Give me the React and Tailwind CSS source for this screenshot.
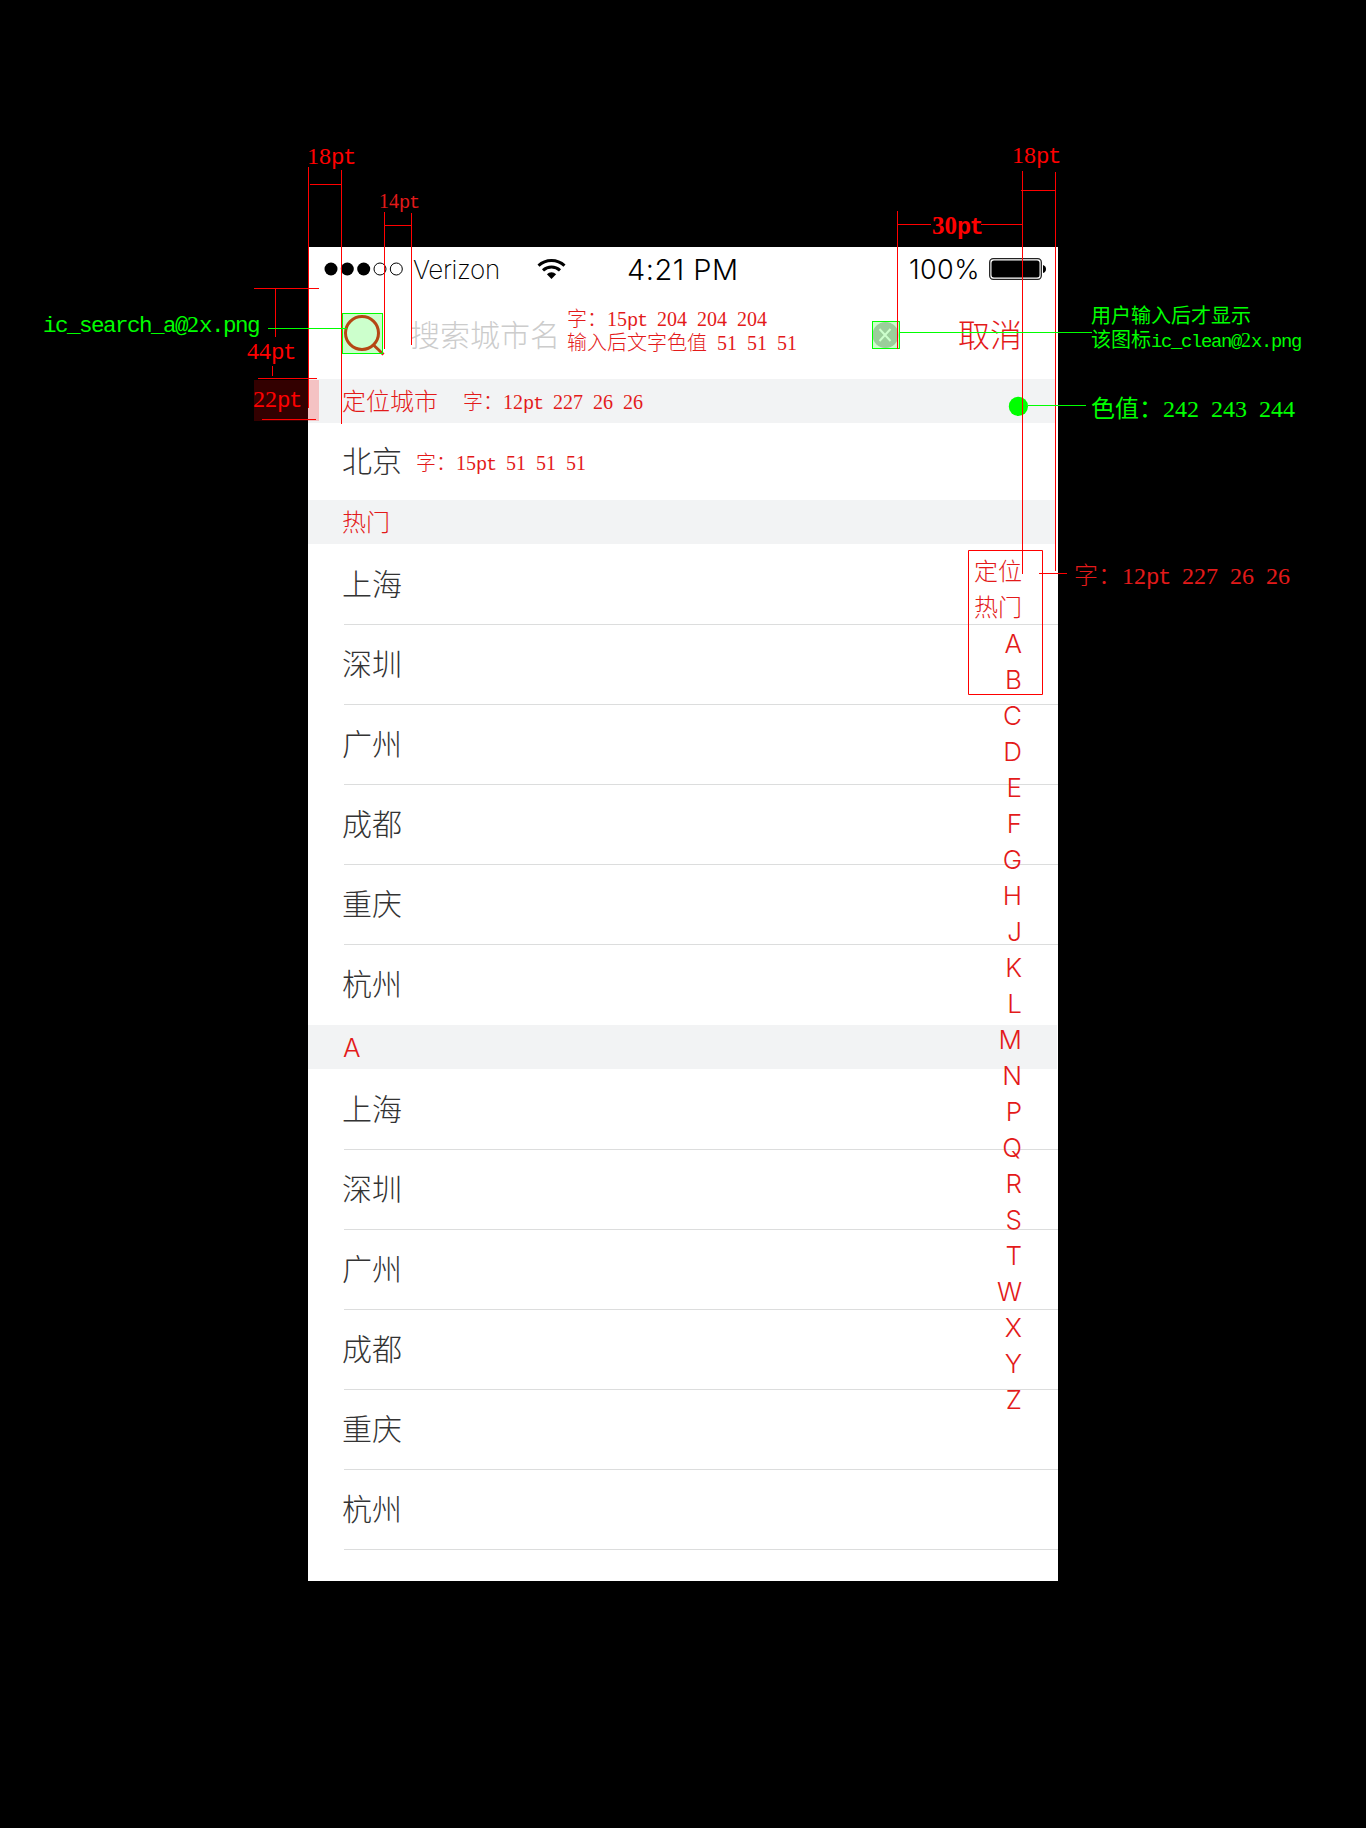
import React from "react";

const cities = ["上海", "深圳", "广州", "成都", "重庆", "杭州"];
const indexItems = ["定位", "热门", ..."ABCDEFGHJKLMNPQRSTWXYZ"];

const sans = "font-[Inter,'Noto_Sans_CJK_SC',sans-serif]";
const hei = "font-['Noto_Sans_CJK_SC',sans-serif]";

/* Annotation text: digits are half an em wide, Latin runs use a monospace that fills half-em cells. */
function Note({ className, lines }) {
  return (
    <div
      lang="zh-CN"
      className={
        "absolute flex flex-col gap-[4px] whitespace-pre leading-none [word-spacing:0.25em] font-['Liberation_Serif','Noto_Sans_CJK_SC',serif] " +
        className
      }
    >
      {lines.map((line) => (
        <p key={line} className="h-[1em]">
          {line.split(/([a-z_.@]+)/).map((run, i) =>
            i % 2 ? (
              <span key={i} className="text-[0.94em] tracking-[-0.068em] font-['Liberation_Mono',monospace]">
                {run}
              </span>
            ) : (
              run
            )
          )}
        </p>
      ))}
    </div>
  );
}

function StatusBar() {
  return (
    <div className={"flex h-[41px] items-center text-black pt-[4px] " + sans}>
      <svg className="mb-[2px] ml-[16px] shrink-0" width="80" height="14" viewBox="0 0 80 14">
        <circle cx="7" cy="7" r="6.5" />
        <circle cx="23.3" cy="7" r="6.5" />
        <circle cx="39.7" cy="7" r="6.5" />
        <circle cx="56" cy="7" r="6" fill="none" stroke="#000" />
        <circle cx="72.3" cy="7" r="6" fill="none" stroke="#000" />
      </svg>
      <span className="ml-[9px] w-[124px] text-[26px] font-extralight tracking-[-0.4px]">Verizon</span>
      <svg className="mb-[2px] shrink-0" width="30" height="22" viewBox="0 0 30 22">
        <g fill="none" stroke="#000" strokeWidth="3">
          <path d="M1.5 7.6a19 19 0 0 1 26 0" />
          <path d="M6 12.3a12.5 12.5 0 0 1 17 0" />
        </g>
        <path d="M14.5 21l-4.6-4.8a6.6 6.6 0 0 1 9.2 0z" />
      </svg>
      <span className="ml-[60px] w-[282px] text-[29px] tracking-[0.5px]">4:21 PM</span>
      <span className="w-[80px] text-[27px] font-light tracking-[0.4px]">100%</span>
      <svg className="mb-[2px] shrink-0" width="58" height="22" viewBox="0 0 58 22">
        <rect x="0.7" y="0.7" width="51.6" height="20.6" rx="3.5" fill="none" stroke="#222" strokeWidth="1.3" />
        <rect x="2.5" y="2.5" width="48" height="17" rx="2.5" />
        <path d="M54 7q3 1 3 4t-3 4z" />
      </svg>
    </div>
  );
}

function SectionHeader({ children, className = "w-[748px]" }) {
  return (
    <div className={"flex h-[44px] items-center bg-[#f2f3f4] pb-[2px] pl-[34px] text-[24px] text-[#e31a1a] " + className}>
      {children}
    </div>
  );
}

function CityList({ lastLine }) {
  return (
    <ul className="pl-[36px] pt-px">
      {cities.map((c, i) => (
        <li
          key={c}
          className={
            "flex h-[80px] items-center border-b pb-[5px] " +
            (i < cities.length - 1 || lastLine ? "border-[#dcdddd]" : "border-transparent")
          }
        >
          <span className="-ml-[2px]">{c}</span>
        </li>
      ))}
    </ul>
  );
}

export default function App() {
  return (
    <div className="relative h-[1828px] w-[1366px] overflow-hidden bg-black pt-[247px] pl-[308px]">
      <main lang="zh-CN" className={"relative h-[1334px] w-[750px] bg-white text-[30px] leading-none font-light text-[#333] " + hei}>
        <StatusBar />
        <div className="flex h-[91px] items-center justify-between pl-[102px] pr-[36px] pb-px">
          <span className="text-[#ccc]">搜索城市名</span>
          <span className="text-[32px] text-[#e31a1a]">取消</span>
        </div>
        <SectionHeader>定位城市</SectionHeader>
        <div className="flex h-[77px] items-center pb-[5px] pl-[34px]">北京</div>
        <SectionHeader>热门</SectionHeader>
        <CityList />
        <SectionHeader className="w-[749px]">
          <span className={"pt-[3px] text-[26px] pl-px " + sans}>A</span>
        </SectionHeader>
        <CityList lastLine />

        <nav className={"absolute right-[36px] top-[307px] flex flex-col items-end text-[#e31a1a] " + sans}>
          {indexItems.map((t, i) => (
            <span key={t} className={"flex h-[36px] items-center " + (i < 2 ? "text-[24px]" : "text-[26px]")}>
              {t}
            </span>
          ))}
        </nav>
      </main>

      {/* measurement lines and markers */}
      <svg className="absolute left-0 top-0" width="1366" height="1828" viewBox="0 0 1366 1828">
        <circle cx="362" cy="333" r="16.5" fill="none" stroke="#e31a1a" strokeWidth="3" />
        <path d="M373.5 345l10 9.5" stroke="#e31a1a" strokeWidth="3" />
        <circle cx="885.5" cy="335" r="13" fill="#c2c2c2" />
        <path d="M879.5 329l11 12M890.5 329l-11 12" stroke="#fff" strokeWidth="2" />
        <rect x="254" y="380" width="65" height="41" fill="#f00" fillOpacity="0.2" />
        <g fill="#0f0" fillOpacity="0.2" stroke="#0f0">
          <rect x="342.5" y="313.5" width="40" height="40" />
          <rect x="872.5" y="321.5" width="27" height="27" />
        </g>
        <circle cx="1018.4" cy="406.4" r="9.6" fill="#0f0" />
        <path
          fill="none"
          stroke="#f00"
          d="M308.5 167V408M341.5 170V424M310 184.5H341M384.5 212V349M411.5 213V345M384 225.5H411M254 288.5H319M275.5 289V337M272.5 366V376M258 378.5H317M262 419.5H316M1022.5 171V574M1055.5 172V571M1021 190.5H1055M897.5 211V349M897 224.5H931M981 224.5H1022M1039 573.5H1067M968.5 550.5H1042.5V694.5H968.5z"
        />
        <path fill="none" stroke="#0f0" d="M268 328.5H347M900 332.5H1092M1028 405.5H1086" />
      </svg>

      <Note className="left-[307px] top-[144px] text-[24px] text-[#f00]" lines={["18pt"]} />
      <Note className="left-[379px] top-[191px] text-[20px] text-[#e31a1a]" lines={["14pt"]} />
      <Note className="left-[1012px] top-[143px] text-[24px] text-[#f00]" lines={["18pt"]} />
      <Note className="left-[932px] top-[213px] text-[25px] font-bold text-[#f00]" lines={["30pt"]} />
      <Note className="left-[247px] top-[339px] text-[24px] text-[#f00]" lines={["44pt"]} />
      <Note className="left-[253px] top-[387px] text-[24px] text-[#f00]" lines={["22pt"]} />
      <Note className="left-[43px] top-[312px] text-[24px] text-[#0f0]" lines={["ic_search_a@2x.png"]} />
      <Note
        className="left-[567px] top-[309px] text-[20px] font-light text-[#e31a1a]"
        lines={["字：15pt 204 204 204", "输入后文字色值 51 51 51"]}
      />
      <Note className="left-[463px] top-[392px] text-[20px] font-light text-[#e31a1a]" lines={["字：12pt 227 26 26"]} />
      <Note className="left-[416px] top-[453px] text-[20px] font-light text-[#e31a1a]" lines={["字：15pt 51 51 51"]} />
      <Note className="left-[1074px] top-[564px] text-[24px] font-light text-[#e31a1a]" lines={["字：12pt 227 26 26"]} />
      <Note
        className="left-[1091px] top-[306px] text-[20px] text-[#0f0]"
        lines={["用户输入后才显示", "该图标ic_clean@2x.png"]}
      />
      <Note className="left-[1091px] top-[397px] text-[24px] text-[#0f0]" lines={["色值：242 243 244"]} />
    </div>
  );
}
